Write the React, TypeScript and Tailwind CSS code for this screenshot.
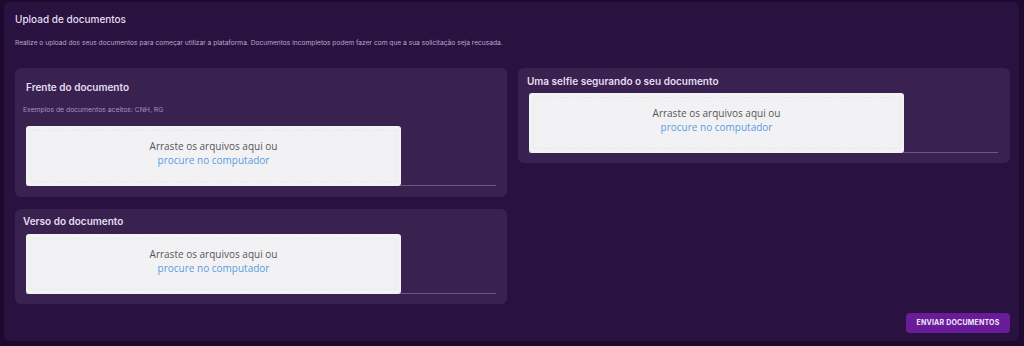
import React from "react";

function Dropzone() {
  return (
    <div className="flex items-end border-b border-[#6a5584]">
      <div className="w-[375px] h-[60px] shrink-0 rounded-[3px] bg-[#f2f2f5] p-[4px] -mb-px">
        <div className="h-full rounded-[2px] border border-dashed border-[#e7e7ec] flex flex-col items-center pt-[8px] text-[10px] leading-[14px] font-['Open_Sans',sans-serif]">
          <span className="text-[#555]">Arraste os arquivos aqui ou</span>
          <span className="text-[#5a9be3]">procure no computador</span>
        </div>
      </div>
      <div className="flex-1" />
    </div>
  );
}

export default function App() {
  return (
    <div className="w-[1024px] h-[346px] bg-[#1c0a2f] pt-[2px] pl-[4px] pr-[5px] pb-[5px] font-['Inter',sans-serif]">
      <div className="h-full rounded-[6px] bg-[#2a1240] pl-[11px] pr-[9px] pt-[11px] pb-[8px] flex flex-col">
        <h1 className="text-[10px] leading-[13px] font-medium text-[#e6ddf0]">Upload de documentos</h1>
        <p className="mt-[12px] text-[6.65px] leading-[10px] text-[#b7a6c9]">
          Realize o upload dos seus documentos para começar utilizar a plataforma. Documentos incompletos podem fazer com que a sua solicitação seja recusada.
        </p>
        <div className="mt-[20px] grid grid-cols-2 gap-x-[11px] items-start">
          <div className="flex flex-col gap-[12px]">
            <section className="rounded-[6px] bg-[#392150] pl-[11px] pr-[11px] pt-[13px] pb-[11px]">
              <h2 className="text-[10px] leading-[13px] font-semibold text-[#e6ddf0]">Frente do documento</h2>
              <p className="mt-[11px] -ml-[3px] text-[6.8px] leading-[10px] text-[#a993bf]">Exemplos de documentos aceitos: CNH, RG</p>
              <div className="mt-[11px]">
                <Dropzone />
              </div>
            </section>
            <section className="rounded-[6px] bg-[#392150] pl-[11px] pr-[11px] pt-[6px] pb-[10px]">
              <h2 className="-ml-[3px] text-[10px] leading-[13px] font-semibold text-[#e6ddf0]">Verso do documento</h2>
              <div className="mt-[6px]">
                <Dropzone />
              </div>
            </section>
          </div>
          <section className="rounded-[6px] bg-[#392150] pl-[11px] pr-[12px] pt-[7px] pb-[10px]">
            <h2 className="-ml-[2px] text-[10px] leading-[13px] font-semibold text-[#e6ddf0]">Uma selfie segurando o seu documento</h2>
            <div className="mt-[5px]">
              <Dropzone />
            </div>
          </section>
        </div>
        <div className="mt-auto flex justify-end">
          <button className="w-[104px] h-[20px] rounded-[4px] bg-[#6a1b9a] text-[7px] font-bold text-[#f1e8f8] tracking-[0.2px]">
            ENVIAR DOCUMENTOS
          </button>
        </div>
      </div>
    </div>
  );
}
